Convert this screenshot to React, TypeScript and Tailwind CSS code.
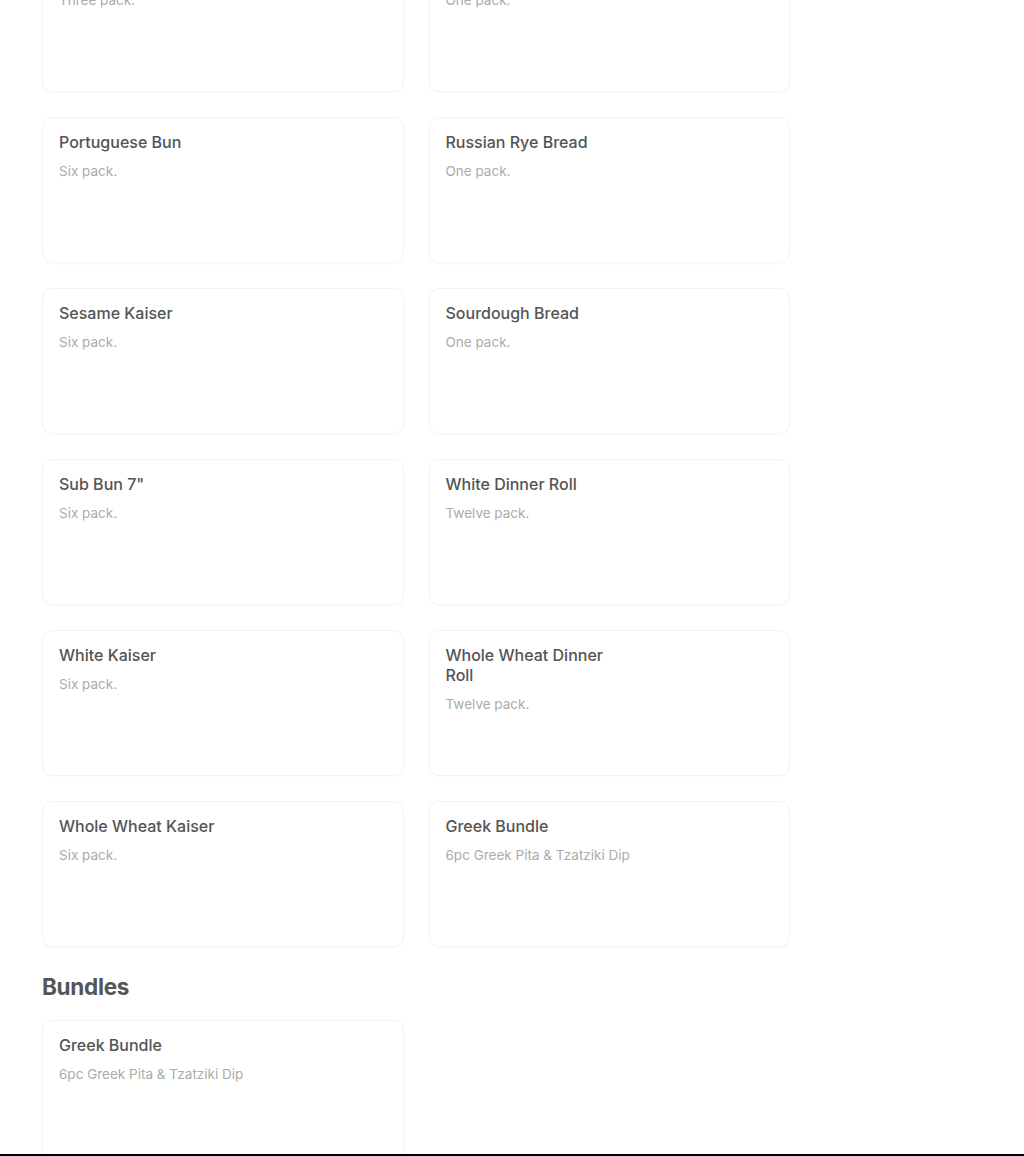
type Item = { name: string; desc: string };

const breads: Item[] = [
  { name: 'Pita Bread', desc: 'Three pack.' },
  { name: 'Pumpernickel Bread', desc: 'One pack.' },
  { name: 'Portuguese Bun', desc: 'Six pack.' },
  { name: 'Russian Rye Bread', desc: 'One pack.' },
  { name: 'Sesame Kaiser', desc: 'Six pack.' },
  { name: 'Sourdough Bread', desc: 'One pack.' },
  { name: 'Sub Bun 7"', desc: 'Six pack.' },
  { name: 'White Dinner Roll', desc: 'Twelve pack.' },
  { name: 'White Kaiser', desc: 'Six pack.' },
  { name: 'Whole Wheat Dinner Roll', desc: 'Twelve pack.' },
  { name: 'Whole Wheat Kaiser', desc: 'Six pack.' },
  { name: 'Greek Bundle', desc: '6pc Greek Pita & Tzatziki Dip' },
];

const bundles: Item[] = [{ name: 'Greek Bundle', desc: '6pc Greek Pita & Tzatziki Dip' }];

function ProductCard({ item }: { item: Item }) {
  return (
    <div className="h-[146px] rounded-[10px] border border-[#f3f3f3] bg-white px-4 pt-[14px] shadow-[0_1px_3px_rgba(0,0,0,0.025)]">
      <h3 className="max-w-[175px] text-[16px] leading-[20px] font-medium text-[#545454]">{item.name}</h3>
      <p className="mt-[9px] text-[13.5px] leading-[20px] text-[#ababab]">{item.desc}</p>
    </div>
  );
}

export default function App() {
  return (
    <div className="flex h-[1156px] flex-col overflow-hidden bg-white font-['Inter',sans-serif]">
      <div className="flex-1 overflow-hidden">
        <div className="ml-[42px] mt-[-54px] w-[748px]">
          <div className="grid grid-cols-2 gap-x-[25px] gap-y-[25px]">
            {breads.map((item, i) => (
              <ProductCard key={i} item={item} />
            ))}
          </div>

          <h2 className="mt-[24px] mb-[17px] text-[22.5px] leading-[32px] font-bold tracking-[-0.3px] text-[#555555]">Bundles</h2>

          <div className="grid grid-cols-2 gap-x-[25px] gap-y-[25px]">
            {bundles.map((item, i) => (
              <ProductCard key={i} item={item} />
            ))}
          </div>
        </div>
      </div>
      <div className="h-[2px] bg-black" />
    </div>
  );
}
